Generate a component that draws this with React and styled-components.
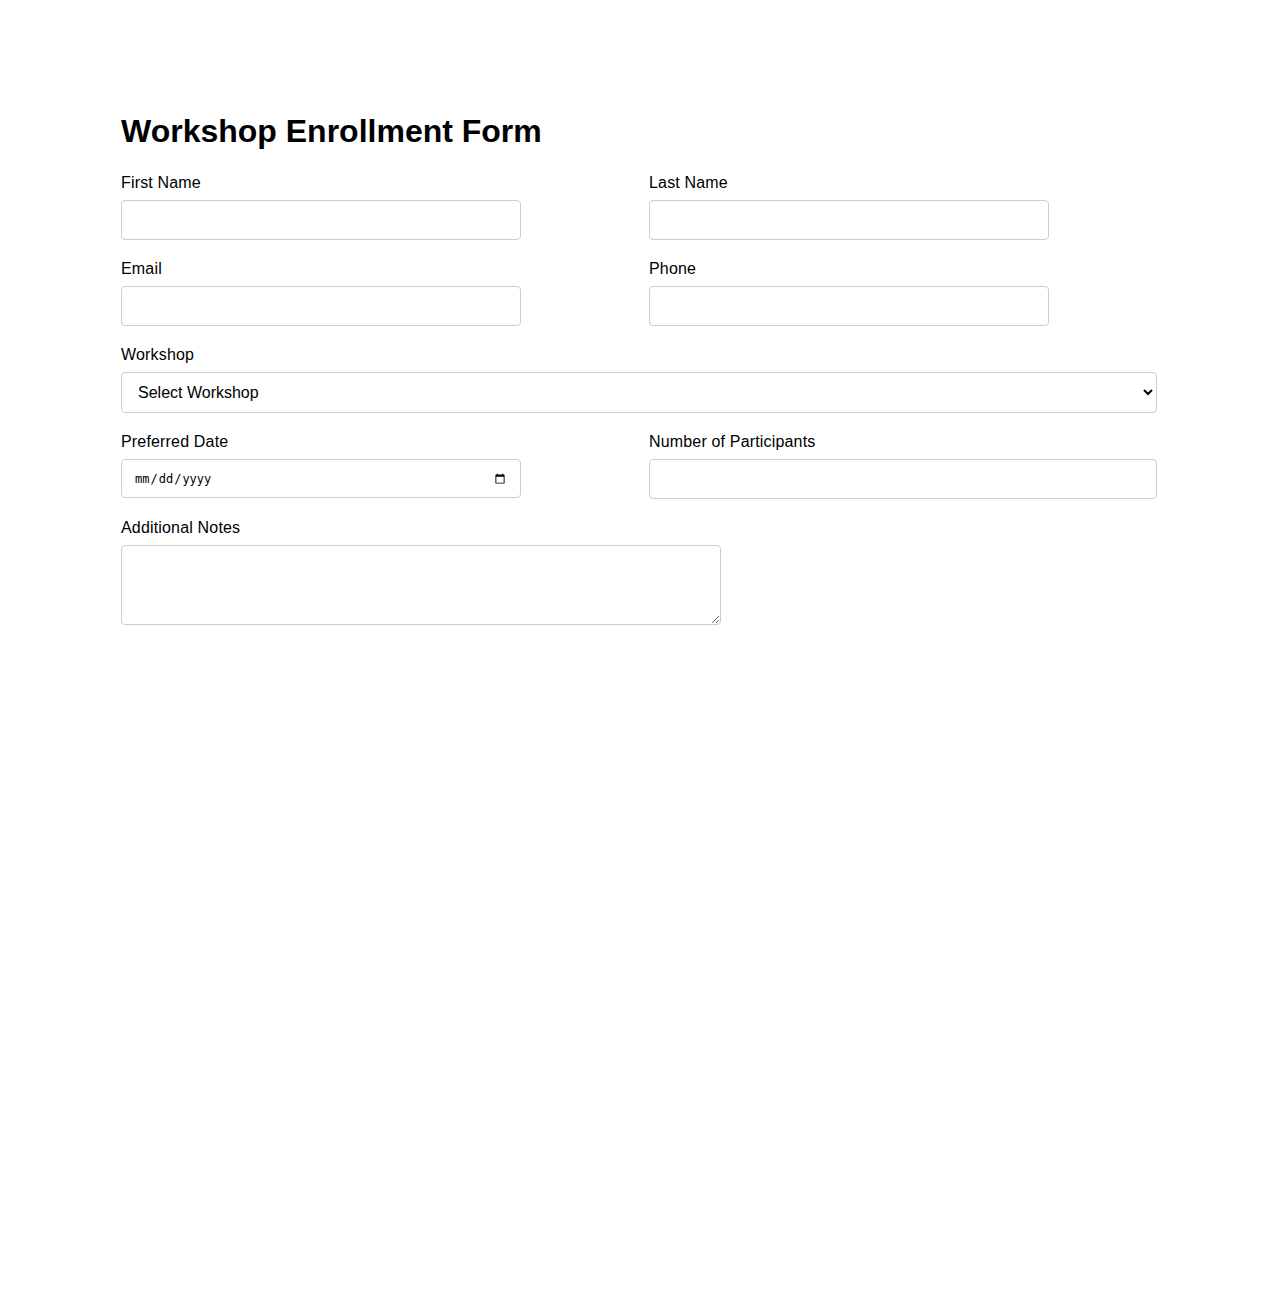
import React from "react";
import styled, { createGlobalStyle } from "styled-components";

const GlobalStyle = createGlobalStyle`
    body {
        margin: 0;
        background: #fff;
        color: #000;
        font-family: "Liberation Sans", Arial, sans-serif;
    }
`;

export default function App(){
    return(
        <>
            <GlobalStyle />
            <Page>
                <Title>Workshop Enrollment Form</Title>
                <Form onSubmit={(e) => e.preventDefault()}>
                    <Field>
                        <Label htmlFor="firstName">First Name</Label>
                        <TextInput id="firstName" type="text" />
                    </Field>
                    <Field>
                        <Label htmlFor="lastName">Last Name</Label>
                        <TextInput id="lastName" type="text" />
                    </Field>
                    <Field>
                        <Label htmlFor="email">Email</Label>
                        <TextInput id="email" type="email" />
                    </Field>
                    <Field>
                        <Label htmlFor="phone">Phone</Label>
                        <TextInput id="phone" type="tel" />
                    </Field>
                    <Field wide>
                        <Label htmlFor="workshop">Workshop</Label>
                        <Select id="workshop" defaultValue="">
                            <option value="">Select Workshop</option>
                            <option value="design">Design Thinking</option>
                            <option value="react">Intro to React</option>
                            <option value="data">Data Visualization</option>
                        </Select>
                    </Field>
                    <Field>
                        <Label htmlFor="date">Preferred Date</Label>
                        <DateInput id="date" type="date" />
                    </Field>
                    <Field>
                        <Label htmlFor="participants">Number of Participants</Label>
                        <TextInput id="participants" type="number" full />
                    </Field>
                    <Field wide>
                        <Label htmlFor="notes">Additional Notes</Label>
                        <Notes id="notes" />
                    </Field>
                </Form>
            </Page>
        </>
    );
}

const Page = styled.div`
    max-width: 1036px;
    margin: 0 auto;
    padding-top: 113px;
`;

const Title = styled.h1`
    font-size: 32px;
    font-weight: bold;
    margin: 0 0 24px;
`;

const Form = styled.form`
    display: grid;
    grid-template-columns: 1fr 1fr;
    column-gap: 20px;
`;

const Field = styled.div`
    grid-column: ${({ wide }) => (wide ? "1 / -1" : "auto")};
    display: flex;
    flex-direction: column;
    align-items: flex-start;
    margin-bottom: 20px;
`;

const Label = styled.label`
    font-size: 16px;
    letter-spacing: 0.17px;
    margin-bottom: 8px;
`;

const TextInput = styled.input`
    box-sizing: border-box;
    width: ${({ full }) => (full ? "100%" : "400px")};
    height: 40px;
    padding: 10px;
    border: 1px solid #ccc;
    border-radius: 4px;
    font-size: 16px;
    font-family: "Liberation Sans", Arial, sans-serif;
`;

const DateInput = styled.input`
    box-sizing: border-box;
    width: 400px;
    height: 39px;
    padding: 10px 12px;
    border: 1px solid #ccc;
    border-radius: 4px;
    font-size: 12px;
    font-family: "DejaVu Sans Mono", monospace;
`;

const Select = styled.select`
    box-sizing: border-box;
    width: 100%;
    height: 41px;
    padding: 10px 10px 10px 12px;
    border: 1px solid #ccc;
    border-radius: 4px;
    background: #fff;
    color: #000;
    font-size: 16px;
    font-family: "Liberation Sans", Arial, sans-serif;
`;

const Notes = styled.textarea`
    box-sizing: border-box;
    width: 600px;
    height: 80px;
    padding: 10px;
    border: 1px solid #ccc;
    border-radius: 4px;
    font-size: 16px;
    font-family: "Liberation Sans", Arial, sans-serif;
`;
